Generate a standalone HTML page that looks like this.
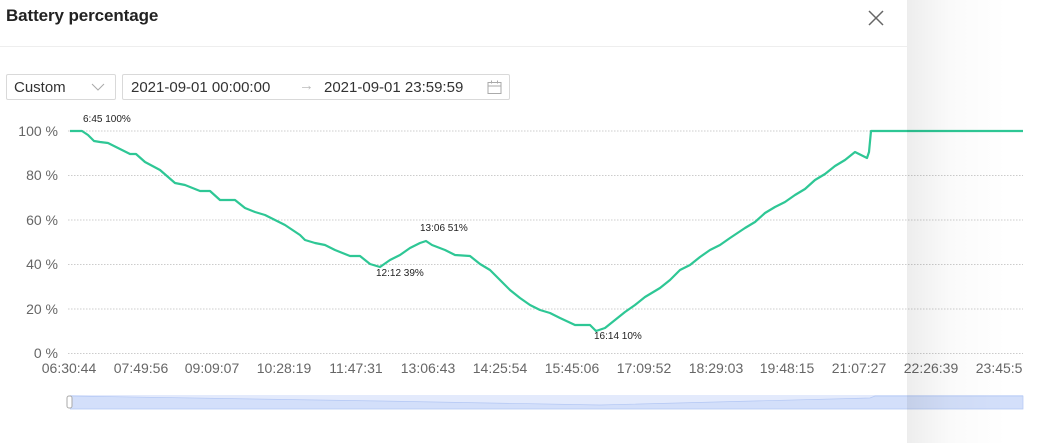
<!DOCTYPE html>
<html><head><style>
body{margin:0;width:1050px;height:443px;overflow:hidden;background:#fff;font-family:"Liberation Sans",sans-serif;position:relative}
.t{position:absolute;left:6px;top:6px;font-size:17px;color:#222;font-weight:bold;letter-spacing:-0.1px}
.x{position:absolute;left:866px;top:8px}
.hr{position:absolute;left:0;top:46px;width:907px;height:1px;background:#eee}
.sel{position:absolute;left:6px;top:74px;width:108px;height:24px;border:1px solid #d9d9d9;border-radius:2px;font-size:15px;color:#333}
.rng{position:absolute;left:122px;top:74px;width:386px;height:24px;border:1px solid #d9d9d9;border-radius:2px;font-size:15px;color:#333}
.ov{position:absolute;left:907px;top:0;width:143px;height:443px;background:linear-gradient(90deg,rgba(0,0,0,.07),rgba(0,0,0,.02) 30%,rgba(0,0,0,0) 70%)}
</style></head><body>
<div class="t">Battery percentage</div>
<svg class="x" width="20" height="20"><path d="M3 3L17 17M17 3L3 17" stroke="#666" stroke-width="1.5"/></svg>
<div class="hr"></div>
<div class="sel"><span style="position:absolute;left:7px;top:4px">Custom</span>
<svg style="position:absolute;left:84px;top:8px" width="14" height="9"><path d="M1 1L7 7L13 1" stroke="#aaa" fill="none"/></svg></div>
<div class="rng"><span style="position:absolute;left:8px;top:4px">2021-09-01 00:00:00</span>
<span style="position:absolute;left:176px;top:2px;color:#bbb">→</span>
<span style="position:absolute;left:201px;top:4px">2021-09-01 23:59:59</span>
<svg style="position:absolute;left:364px;top:5px" width="15" height="15"><rect x="1" y="2.5" width="13" height="11" fill="none" stroke="#aaa"/><path d="M1 6h13M4.5 0.5v3M10.5 0.5v3" stroke="#aaa"/></svg></div>
<svg width="1050" height="443" style="position:absolute;left:0;top:0" font-family="Liberation Sans,sans-serif">
<defs><clipPath id="c"><rect x="0" y="0" width="1023" height="443"/></clipPath></defs>
<g stroke="#ccc" stroke-dasharray="1.5,1.5">
<line x1="68" x2="1023" y1="131" y2="131"/><line x1="68" x2="1023" y1="175.5" y2="175.5"/><line x1="68" x2="1023" y1="220" y2="220"/><line x1="68" x2="1023" y1="264.5" y2="264.5"/><line x1="68" x2="1023" y1="309" y2="309"/><line x1="68" x2="1023" y1="353.5" y2="353.5"/></g>
<g fill="#666" font-size="14" text-anchor="end">
<text x="58" y="136">100 %</text><text x="58" y="180">80 %</text><text x="58" y="225">60 %</text><text x="58" y="269">40 %</text><text x="58" y="314">20 %</text><text x="58" y="358">0 %</text></g>
<g fill="#666" font-size="14" text-anchor="middle" clip-path="url(#c)">
<text x="69" y="373">06:30:44</text><text x="141" y="373">07:49:56</text><text x="212" y="373">09:09:07</text><text x="284" y="373">10:28:19</text><text x="356" y="373">11:47:31</text><text x="428" y="373">13:06:43</text><text x="500" y="373">14:25:54</text><text x="572" y="373">15:45:06</text><text x="644" y="373">17:09:52</text><text x="716" y="373">18:29:03</text><text x="787" y="373">19:48:15</text><text x="859" y="373">21:07:27</text><text x="931" y="373">22:26:39</text><text x="1003" y="373">23:45:50</text></g>
<polyline fill="none" stroke="#2ec795" stroke-width="2.2" stroke-linejoin="round" points="70,131 82,131 88,135 94,141 100,142 108,143 130,154 136,154 145,162 160,170 175,183 185,185 200,191 210,191 220,200 235,200 245,208 255,212 265,215 275,220 285,225 300,235 305,240 315,243 325,245 335,250 350,256 360,256 370,264 380,267 390,260 400,255 410,248 420,243 426,241 432,245 445,250 455,255 470,256 480,264 490,270 500,280 510,290 520,298 530,305 540,310 550,313 560,318 575,325 590,325 596,331 605,328 615,320 625,312 635,305 645,297 660,288 670,280 680,270 690,265 700,257 710,250 720,245 730,238 745,228 755,222 765,213 775,207 785,202 795,195 805,189 815,180 825,174 835,166 845,160 855,152 867,158 869,152 871,131 1023,131"/>
<g fill="#222" font-size="10">
<text x="83" y="122">6:45 100%</text><text x="420" y="231">13:06  51%</text><text x="376" y="276">12:12  39%</text><text x="594" y="339">16:14  10%</text></g>
<rect x="70" y="395" width="953" height="14" fill="#e3eafc"/>
<polyline fill="#d3dffa" stroke="#b3c7f4" stroke-width="0.7" points="70,396 380,401 600,405 870,398 875,396 1023,396 1023,409 70,409"/>
<rect x="67" y="396" width="5" height="12" rx="2" fill="#fff" stroke="#aaa"/>
</svg>
<div class="ov"></div>
</body></html>
